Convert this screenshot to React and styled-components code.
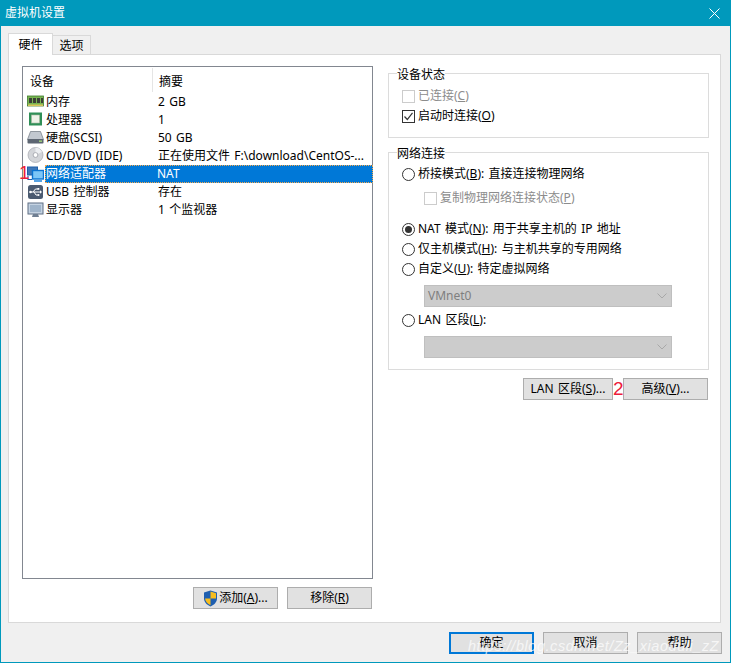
import React from "react";
import styled, { createGlobalStyle } from "styled-components";

const Global = createGlobalStyle`
  html, body { margin: 0; padding: 0; background: #f0f0f0; }
  * { box-sizing: border-box; }
  u { text-underline-offset: 1px; }
`;
const FONT = `"Noto Sans", "Noto Sans CJK SC", sans-serif`;

const Win = styled.div`
  position: relative; width: 731px; height: 663px; display: flex; flex-direction: column;
  border: 1px solid #0099bc; border-top: 0; background: #f0f0f0; overflow: hidden;
  font: 12px/16px ${FONT}; color: #000; word-spacing: 1.2px;
`;
const TitleBar = styled.div`
  height: 26px; flex: none; margin: 0 -1px; background: #0099bc; color: #fff;
  display: flex; align-items: center; justify-content: space-between; padding: 0 11px 0 5px;
  font-size: 12px;
`;
const Body = styled.div`
  flex: 1; display: flex; flex-direction: column; padding: 7px 9px 8px 7px;
`;
const TabStrip = styled.div`display: flex; height: 22px; align-items: flex-end; position: relative; z-index: 1; margin-bottom: -1px;`;
const Tab = styled.div`
  height: ${p => (p.$active ? 22 : 20)}px; width: ${p => (p.$active ? 45 : 38)}px;
  background: ${p => (p.$active ? "#fff" : "#f0f0f0")};
  border: 1px solid #d9d9d9; border-bottom: ${p => (p.$active ? 0 : "1px solid #d9d9d9")};
  border-left: ${p => (p.$active ? "1px solid #d9d9d9" : 0)};
  display: flex; align-items: center; justify-content: center; padding-top: ${p => (p.$active ? 0 : 1)}px;
`;
const Panel = styled.div`
  height: 569px; background: #fff; border: 1px solid #d9d9d9; display: flex; padding: 11px 11px 0 13px; gap: 15px;
`;
const Left = styled.div`width: 351px; display: flex; flex-direction: column;`;
const List = styled.div`
  height: 513px; border: 1px solid #828790; background: #fff; padding: 1px 0 0 1px;
`;
const Header = styled.div`display: flex; height: 24px; align-items: center;`;
const HeadCell = styled.div`
  height: 24px; display: flex; align-items: center; padding: 3px 0 0 6px;
  width: ${p => p.$w}px; border-right: ${p => (p.$sep ? "1px solid #e5e5e5" : "0")};
`;
const Row = styled.div`
  display: flex; height: 18.15px; align-items: center; width: 349px;
`;
const IconCell = styled.div`width: 21px; height: 18px; flex: none; display: flex; align-items: center; justify-content: flex-end; padding-right: 1px;`;
const Name = styled.div`
  width: 108px; flex: none; height: 18px; display: flex; align-items: center; padding: 1px 0 0 1px; white-space: nowrap;
`;
const Summary = styled.div`flex: 1; height: 18px; display: flex; align-items: center; padding: 1px 0 0 5px; white-space: nowrap;`;
const Sel = styled.div`
  flex: 1; display: flex; height: 18px; align-items: center; background: #0078d7; color: #fff;
  outline: 1px dotted #f6a94d; outline-offset: -1px;
  & > div { padding-top: 0; }
`;
const SelName = styled(Name)`width: 107px;`;
const Mark = styled.span`
  position: absolute; color: #ed1c3a; font: 19px/22px "Liberation Sans", sans-serif;
  left: ${p => p.$x}px; top: ${p => p.$y}px; z-index: 2;
`;
const BtnRow = styled.div`display: flex; justify-content: flex-end; gap: ${p => p.$gap || 9}px; margin-top: 8px; padding-right: 1px;`;
const Btn = styled.button`
  width: ${p => p.$w || 85}px; height: 22px; padding: 0; background: #e1e1e1; border: 1px solid #adadad;
  font: inherit; word-spacing: inherit; color: #000; display: flex; align-items: center; justify-content: center; gap: 1px; white-space: nowrap;
`;
const Primary = styled(Btn)`border: 2px solid #0078d7;`;
const Right = styled.div`width: 321px; display: flex; flex-direction: column; margin-top: -3px;`;
const Group = styled.fieldset`
  margin: 0; padding: 0 0 0 13px; border: 1px solid #dcdcdc; min-width: 0; height: ${p => p.$h}px;
`;
const Legend = styled.legend`padding: 4px 0 0 0; margin-left: -5px; line-height: 16px; font-size: 12px;`;
const Gap = styled.div`height: ${p => p.$h}px; flex: none;`;
const Opt = styled.div`
  display: flex; align-items: center; height: 20px; gap: 3px; white-space: nowrap; padding-left: ${p => p.$indent || 0}px;
  color: ${p => (p.$off ? "#8c8c8c" : "#000")}; margin-top: ${p => p.$mt || 0}px;
`;
const Box = styled.span`
  width: 13px; height: 13px; flex: none; border: 1px solid ${p => (p.$off ? "#cccccc" : "#333")}; background: #fff;
  display: flex; align-items: center; justify-content: center;
`;
const Radio = styled.span`
  width: 13px; height: 13px; flex: none; border: 1px solid #333; border-radius: 50%; background: #fff;
  display: flex; align-items: center; justify-content: center;
  &::after { content: ""; width: 7px; height: 7px; border-radius: 50%; background: ${p => (p.$on ? "#333" : "transparent")}; }
`;
const Select = styled.div`
  width: 248px; height: 22px; margin: ${p => p.$m}; background: #cccccc; border: 1px solid #bfbfbf; color: #7f7f7f;
  display: flex; align-items: center; justify-content: space-between; padding: 0 4px 0 3px;
`;
const Footer = styled.div`display: flex; justify-content: flex-end; gap: 9px; margin: 9px -1px 0 0;`;
const Watermark = styled.div`
  position: absolute; left: 467px; top: 634px; z-index: 3; color: rgba(255,255,255,.72);
  font: italic 14.5px/24px "Liberation Sans", sans-serif; letter-spacing: .55px; white-space: nowrap; pointer-events: none;
`;

const Ic = ({ children }) => <svg width="17" height="16" viewBox="0 0 17 16">{children}</svg>;
const IconRam = () => (
  <Ic>
    <rect x=".5" y="3" width="16" height="10" fill="#79b552" stroke="#3f7a2c" strokeWidth=".8" />
    <rect x="2" y="5" width="3" height="5" fill="#3b3f36" /><rect x="6" y="5" width="3" height="5" fill="#3b3f36" />
    <rect x="10" y="5" width="3" height="5" fill="#3b3f36" /><rect x="14" y="5" width="2" height="5" fill="#3b3f36" />
    <rect x="1" y="11.5" width="15" height="1.5" fill="#d8c45a" />
  </Ic>
);
const IconCpu = () => (
  <Ic>
    <rect x="2" y="1.5" width="13" height="13" fill="#2f8f57" />
    <rect x="4.5" y="4" width="8" height="8" fill="#eef2e8" stroke="#a8b8a0" strokeWidth=".6" />
  </Ic>
);
const IconDisk = () => (
  <Ic>
    <path d="M3.5 2.5h10l3 8h-16z" fill="#c2c8d0" stroke="#6d7580" strokeWidth=".7" />
    <rect x=".5" y="10" width="16" height="4.5" rx=".8" fill="#5d6672" />
    <rect x="12" y="11.5" width="3" height="1.3" fill="#a8e07a" />
  </Ic>
);
const IconCd = () => (
  <Ic>
    <circle cx="8.5" cy="8" r="7.5" fill="#d3d5d9" stroke="#a3a6ad" strokeWidth=".7" />
    <path d="M8.5 .8a7.2 7.2 0 0 1 6.5 4.2L8.5 8z" fill="#eceef1" />
    <circle cx="8.5" cy="8" r="2.4" fill="#fff" stroke="#9a9da4" strokeWidth=".8" />
  </Ic>
);
const IconNet = () => (
  <Ic>
    <rect x="0.5" y="1" width="10" height="8" fill="#3f78b8" stroke="#1f5fa8" />
    <path d="M1 10v3.5h4" stroke="#1f5fa8" strokeWidth="1.2" fill="none" />
    <rect x="5.5" y="4.5" width="11" height="8.5" fill="#7cc6f7" stroke="#0b74d2" strokeWidth="1.4" />
    <path d="M7 15h8" stroke="#0e7ad6" strokeWidth="1.4" />
  </Ic>
);
const IconUsb = () => (
  <Ic>
    <rect x="1" y="1" width="15" height="14" rx="2.5" fill="#4a5a70" />
    <path d="M3 8h11M6 8l2.5-3H11M7 8l2 3h2" stroke="#fff" strokeWidth="1" fill="none" />
    <circle cx="3.5" cy="8" r="1.3" fill="#fff" /><path d="M13 6.3 15 8l-2 1.7z" fill="#fff" />
    <rect x="10.5" y="4" width="1.8" height="1.8" fill="#fff" /><circle cx="11.5" cy="11" r="1" fill="#fff" />
  </Ic>
);
const IconMon = () => (
  <Ic>
    <rect x="1" y="1" width="15" height="11" fill="#c5d3e2" stroke="#5f6f84" />
    <rect x="3" y="3" width="11" height="7" fill="#9fb4ca" />
    <path d="M6 12h5l1 3H5z" fill="#6f7f92" />
  </Ic>
);
const Shield = () => (
  <svg width="15" height="17" viewBox="0 0 15 17">
    <path d="M7.5.5 14 2.5v6c0 3.5-2.8 6.3-6.5 8C3.8 14.8 1 12 1 8.5v-6z" fill="#1f5fb0" />
    <path d="M7.5 1.5v7H13V3.2zM7.5 8.5H2c.3 3 2.6 5.3 5.5 6.8z" fill="#f7bd1e" />
  </svg>
);
const Chevron = () => (
  <svg width="10" height="6" viewBox="0 0 10 6"><path d="M.5.5 5 5 9.5.5" fill="none" stroke="#a8a8a8" /></svg>
);
const Check = () => (
  <svg width="11" height="11" viewBox="0 0 11 11"><path d="M1.5 5.5 4.3 8.5 9.5 1.8" fill="none" stroke="#333" strokeWidth="1.2" /></svg>
);
const Close = () => (
  <svg width="11" height="11" viewBox="0 0 11 11"><path d="M.5.5l10 10M10.5.5l-10 10" stroke="#fff" strokeWidth="1" /></svg>
);

const items = [
  [IconRam, "内存", "2 GB"],
  [IconCpu, "处理器", "1"],
  [IconDisk, "硬盘(SCSI)", "50 GB"],
  [IconCd, "CD/DVD (IDE)", "正在使用文件 F:\\download\\CentOS-..."],
  [IconNet, "网络适配器", "NAT", true],
  [IconUsb, "USB 控制器", "存在"],
  [IconMon, "显示器", "1 个监视器"],
];

export default function App() {
  return (
    <Win>
      <Global />
      <TitleBar><span>虚拟机设置</span><Close /></TitleBar>
      <Body>
        <TabStrip>
          <Tab $active>硬件</Tab>
          <Tab>选项</Tab>
        </TabStrip>
        <Panel>
          <Left>
            <List>
              <Header>
                <HeadCell $w={129} $sep>设备</HeadCell>
                <HeadCell $w={200}>摘要</HeadCell>
              </Header>
              {items.map(([I, n, s, sel]) => (
                <Row key={n}>
                  <IconCell><I /></IconCell>
                  {sel ? (
                    <Sel><SelName>{n}</SelName><Summary>{s}</Summary></Sel>
                  ) : (
                    <><Name>{n}</Name><Summary>{s}</Summary></>
                  )}
                </Row>
              ))}
            </List>
            <BtnRow>
              <Btn><Shield /><span>添加(<u>A</u>)...</span></Btn>
              <Btn><span>移除(<u>R</u>)</span></Btn>
            </BtnRow>
          </Left>
          <Right>
            <Group $h={75}>
              <Legend>设备状态</Legend>
              <Opt $off $mt={3}><Box $off /><span>已连接(<u>C</u>)</span></Opt>
              <Opt><Box><Check /></Box><span>启动时连接(<u>O</u>)</span></Opt>
            </Group>
            <Gap $h={4} />
            <Group $h={228}>
              <Legend>网络连接</Legend>
              <Opt $mt={2}><Radio /><span>桥接模式(<u>B</u>): 直接连接物理网络</span></Opt>
              <Opt $off $indent={22} $mt={4}><Box $off /><span>复制物理网络连接状态(<u>P</u>)</span></Opt>
              <Opt $mt={11}><Radio $on /><span>NAT 模式(<u>N</u>): 用于共享主机的 IP 地址</span></Opt>
              <Opt><Radio /><span>仅主机模式(<u>H</u>): 与主机共享的专用网络</span></Opt>
              <Opt><Radio /><span>自定义(<u>U</u>): 特定虚拟网络</span></Opt>
              <Select $m="6px 0 3px 22px">VMnet0<Chevron /></Select>
              <Opt><Radio /><span>LAN 区段(<u>L</u>):</span></Opt>
              <Select $m="6px 0 0 22px"><span /><Chevron /></Select>
            </Group>
            <BtnRow $gap={10}>
              <Btn $w={90}><span>LAN 区段(<u>S</u>)...</span></Btn>
              <Btn><span>高级(<u>V</u>)...</span></Btn>
            </BtnRow>
          </Right>
        </Panel>
        <Footer>
          <Primary>确定</Primary>
          <Btn>取消</Btn>
          <Btn>帮助</Btn>
        </Footer>
      </Body>
      <Mark $x={18} $y={162}>1</Mark>
      <Mark $x={612} $y={378}>2</Mark>
      <Watermark>https://blog.csdn.net/Zz_xiaoduli_zZ</Watermark>
    </Win>
  );
}
